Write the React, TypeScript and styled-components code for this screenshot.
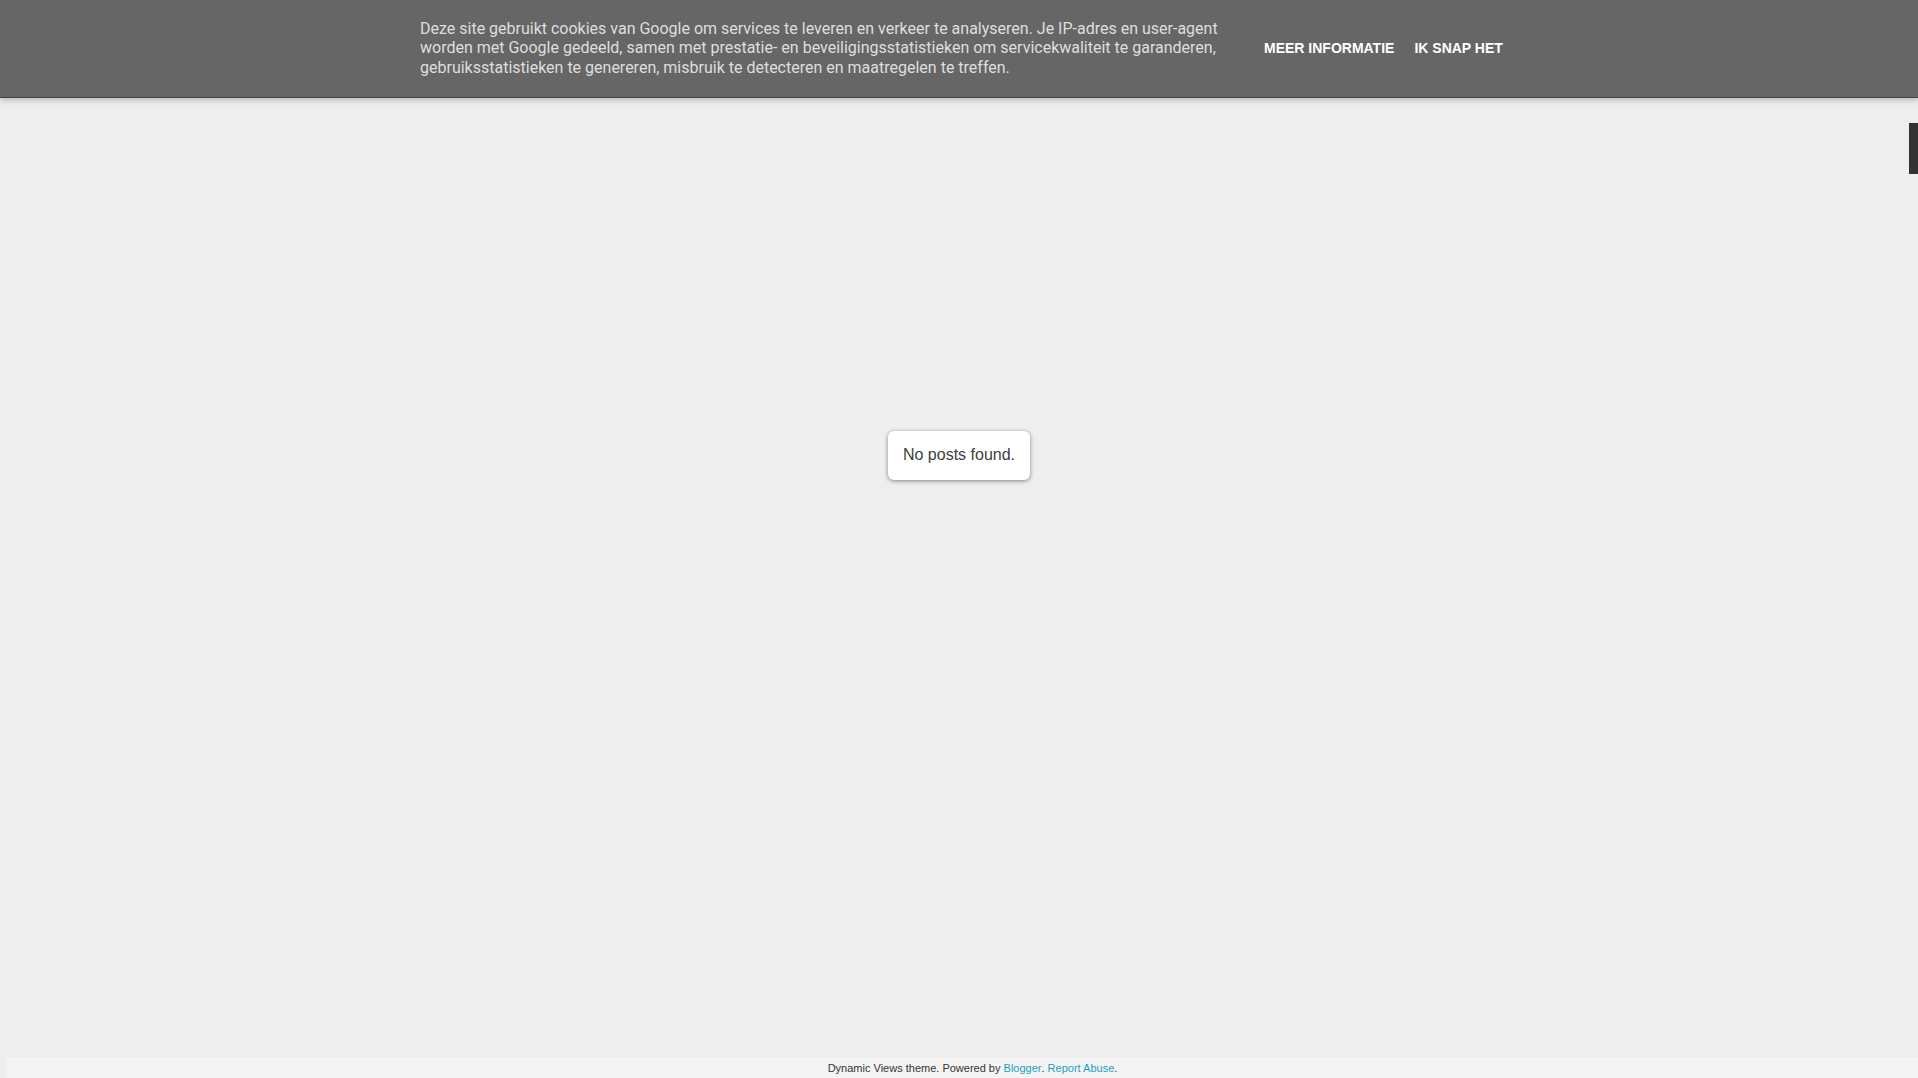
import React from 'react';
import styled, { createGlobalStyle } from 'styled-components';

const GlobalStyle = createGlobalStyle`
  html, body {
    margin: 0;
    padding: 0;
    height: 100%;
    background: #eeeeee;
  }
  #root {
    height: 100%;
  }
`

const Page = styled.div`
  display: flex;
  flex-direction: column;
  height: 1078px;
  overflow: hidden;
  background: #eeeeee;
  font-family: "Liberation Sans", Arial, sans-serif;
`

const CookieBar = styled.div`
  flex: none;
  height: 97px;
  background: #666666;
  border-bottom: 1px solid #444444;
  box-shadow: 0 2px 6px rgba(0, 0, 0, 0.25);
  display: flex;
  align-items: center;
  padding-left: 420px;
  position: relative;
  z-index: 2;
`

const CookieText = styled.span`
  width: 810px;
  font-family: Roboto, "Liberation Sans", sans-serif;
  font-size: 16px;
  line-height: 19.5px;
  color: #dedede;
  margin-bottom: 1px;
`

const CookieButtons = styled.div`
  display: flex;
  gap: 20px;
  margin-left: 34px;
  margin-bottom: 2px;
`

const CookieButton = styled.a`
  font-family: "Liberation Sans", Arial, sans-serif;
  font-size: 14px;
  font-weight: bold;
  text-transform: uppercase;
  color: #ffffff;
  text-decoration: none;
  cursor: pointer;
`

const Content = styled.div`
  flex: 1;
  display: flex;
  align-items: flex-start;
  justify-content: center;
  position: relative;
`

const EmptyCard = styled.div`
  margin-top: 333px;
  background: #ffffff;
  border-radius: 6px;
  box-shadow: 0 1px 4px rgba(0, 0, 0, 0.45);
  padding: 14px 15px 15px;
  font-size: 16px;
  line-height: 20px;
  color: #404040;
`

const SideTab = styled.div`
  position: absolute;
  right: 0;
  top: 25px;
  width: 9px;
  height: 51px;
  background: #333333;
`

const Footer = styled.div`
  flex: none;
  height: 21px;
  margin-left: 7px;
  background: #f4f4f4;
  display: flex;
  align-items: center;
  justify-content: center;
  padding-left: 20px;
  font-size: 11px;
  color: #333333;
`

const FooterLink = styled.a`
  color: #1e9fc3;
  text-decoration: none;
`

export default function App() {
  return (
    <Page>
      <GlobalStyle />
      <CookieBar>
        <CookieText>
          Deze site gebruikt cookies van Google om services te leveren en verkeer te analyseren. Je IP-adres en user-agent
          worden met Google gedeeld, samen met prestatie- en beveiligingsstatistieken om servicekwaliteit te garanderen,
          gebruiksstatistieken te genereren, misbruik te detecteren en maatregelen te treffen.
        </CookieText>
        <CookieButtons>
          <CookieButton>Meer informatie</CookieButton>
          <CookieButton>Ik snap het</CookieButton>
        </CookieButtons>
      </CookieBar>
      <Content>
        <EmptyCard>No posts found.</EmptyCard>
        <SideTab />
      </Content>
      <Footer>
        Dynamic Views theme. Powered by&nbsp;<FooterLink>Blogger</FooterLink>.&nbsp;<FooterLink>Report Abuse</FooterLink>.
      </Footer>
    </Page>
  );
}
